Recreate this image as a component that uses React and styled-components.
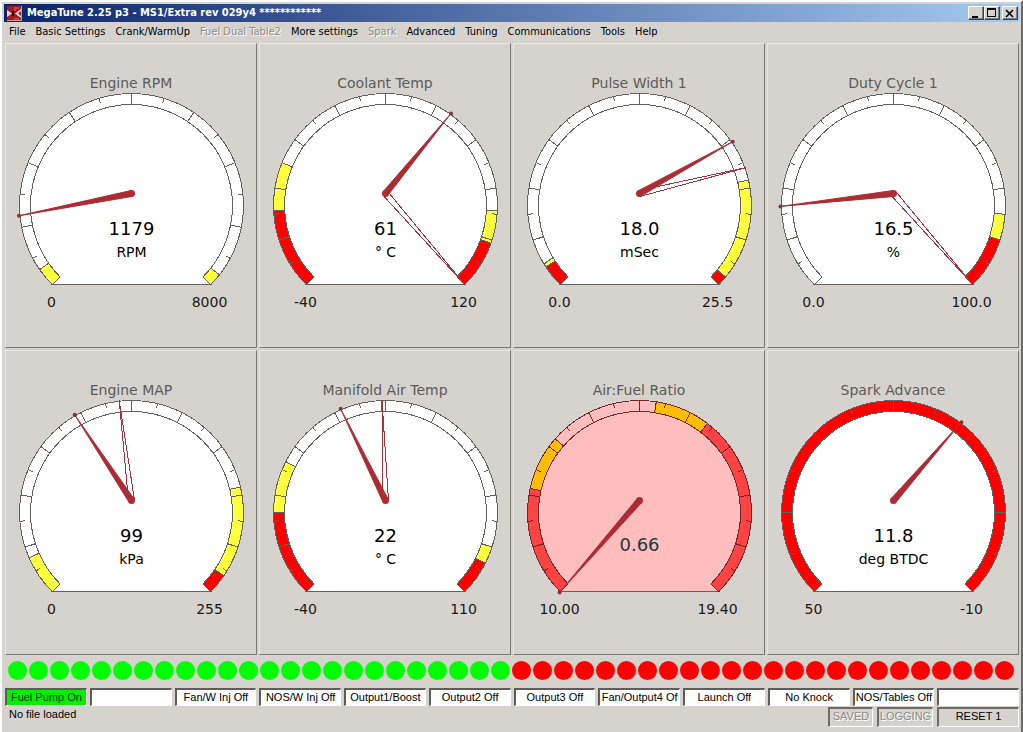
import React from "react";
import styled, { createGlobalStyle } from "styled-components";

const FACE = "#d6d3ce";
const YELLOW = "#ffff3c";
const RED = "#ff0000";

const GlobalStyle = createGlobalStyle`
  * {
    box-sizing: border-box;
  }
  body {
    margin: 0;
    background: ${FACE};
    color: black;
    font-family: "Liberation Sans", Arial, sans-serif;
    font-size: 11px;
  }
`

const Window = styled.div`
  min-height: 100vh;
  display: flex;
  flex-direction: column;
  background: ${FACE};
  padding: 2px 2px 0 2px;
  border-style: solid;
  border-width: 2px 2px 0 2px;
  border-color: white #6b6963 white white;
`

const TitleBar = styled.header`
  height: 18px;
  display: flex;
  align-items: center;
  padding: 0 1px 0 3px;
  background: linear-gradient(90deg, #0a246a, #a6caf0);
`

const Title = styled.h1`
  flex: 1;
  margin: 0 0 0 5px;
  font-family: "DejaVu Sans Condensed", "DejaVu Sans", sans-serif;
  font-stretch: condensed;
  font-size: 11px;
  font-weight: bold;
  line-height: 18px;
  color: white;
  white-space: nowrap;
`

const WindowButton = styled.button`
  width: 16px;
  height: 14px;
  padding: 0;
  margin-left: ${props => (props.$apart ? "2px" : "0")};
  display: flex;
  align-items: center;
  justify-content: center;
  background: ${FACE};
  border: 1px solid;
  border-color: white #404040 #404040 white;
  box-shadow: inset -1px -1px 0 #808080;
`

const MenuBar = styled.nav`
  height: 20px;
  display: flex;
  align-items: center;
`

const MenuItem = styled.button`
  border: 0;
  padding: 0 5px;
  background: none;
  font-family: "DejaVu Sans Condensed", "DejaVu Sans", sans-serif;
  font-stretch: condensed;
  font-size: 11px;
  line-height: 20px;
  white-space: nowrap;
  color: black;
  &:disabled {
    color: #8c8a85;
    text-shadow: 1px 1px 0 white;
  }
`

const Body = styled.main`
  padding: 1px 0 5px 1px;
  display: flex;
  flex-direction: column;
`

const GaugeGrid = styled.div`
  display: grid;
  grid-template-columns: repeat(4, 1fr);
  gap: 2px;
`

const Panel = styled.section`
  display: flex;
  flex-direction: column;
  align-items: center;
  padding: 30px 0 35px;
  border: 1px solid;
  border-color: #e9e8e5 #7b7974 #7b7974 #e9e8e5;
`

const GaugeTitle = styled.h2`
  margin: 0;
  font-family: "DejaVu Sans", Verdana, sans-serif;
  font-size: 14px;
  font-weight: normal;
  line-height: 18px;
  color: #5c5a57;
`

const Dial = styled.svg`
  display: block;
  width: 240px;
  height: 220px;
  font-family: "DejaVu Sans", Verdana, sans-serif;
  text-anchor: middle;
`

const Leds = styled.div`
  display: flex;
  justify-content: space-between;
  padding: 6px 5px 8px 3px;
`

const Led = styled.span`
  width: 19px;
  height: 19px;
  border-radius: 50%;
  background: ${props => (props.$on ? "#00ff00" : RED)};
`

const Outputs = styled.div`
  display: grid;
  grid-template-columns: repeat(12, minmax(0, 1fr));
  gap: 3px;
`

const Output = styled.div`
  height: 18px;
  overflow: hidden;
  text-align: center;
  line-height: 15px;
  white-space: nowrap;
  color: ${props => (props.$on ? "#003000" : "black")};
  background: ${props => (props.$on ? "#00f000" : "white")};
  border-style: solid;
  border-width: 2px 1px 1px 2px;
  border-color: #5f5d59 white white #5f5d59;
`

const StatusBar = styled.footer`
  display: flex;
  align-items: flex-start;
  gap: 4px;
  padding-top: 1px;
`

const FileName = styled.span`
  flex: 1;
  padding-left: 4px;
  line-height: 14px;
`

const StatusButton = styled.button`
  width: ${props => props.$width}px;
  height: 20px;
  padding: 0 0 2px;
  font-family: inherit;
  font-size: 11px;
  line-height: 15px;
  color: black;
  background: ${FACE};
  border-style: solid;
  border-width: 2px 1px 1px 2px;
  border-color: #6e6c68 white white #6e6c68;
  &:disabled {
    color: #8c8a85;
    text-shadow: 1px 1px 0 white;
  }
`

const menu = [
  "File", "Basic Settings", "Crank/WarmUp", "Fuel Dual Table2", "More settings", "Spark",
  "Advanced", "Tuning", "Communications", "Tools", "Help"
]
const disabledMenu = ["Fuel Dual Table2", "Spark"]

// zones: [from, to, color], peak: outlined needle
const gauges = [
  {
    title: "Engine RPM", min: 0, max: 8000, value: 1179, text: "1179", units: "RPM", low: "0", high: "8000", steps: 8,
    zones: [[0, 300, YELLOW], [7800, 8000, YELLOW]]
  },
  {
    title: "Coolant Temp", min: -40, max: 120, value: 61, text: "61", units: "° C", low: "-40", high: "120", steps: 10, peak: 120,
    zones: [[-40, -15, RED], [-15, 0, YELLOW], [95, 105, YELLOW], [105, 120, RED]]
  },
  {
    title: "Pulse Width 1", min: 0, max: 25.5, value: 18, text: "18.0", units: "mSec", low: "0.0", high: "25.5", steps: 10, peak: 19.4,
    zones: [[0, 1.1, RED], [1.1, 1.3, YELLOW], [20, 25, YELLOW], [25, 25.5, RED]]
  },
  {
    title: "Duty Cycle 1", min: 0, max: 100, value: 16.5, text: "16.5", units: "%", low: "0.0", high: "100.0", steps: 10, peak: 100,
    zones: [[85, 90, YELLOW], [90, 100, RED]]
  },
  {
    title: "Engine MAP", min: 0, max: 255, value: 99, text: "99", units: "kPa", low: "0", high: "255", steps: 10, peak: 121.6,
    zones: [[0, 20, YELLOW], [200, 245, YELLOW], [245, 255, RED]]
  },
  {
    title: "Manifold Air Temp", min: -40, max: 110, value: 22, text: "22", units: "° C", low: "-40", high: "110", steps: 10, peak: 34,
    zones: [[-40, -15, RED], [-15, 0, YELLOW], [95, 100, YELLOW], [100, 110, RED]]
  },
  {
    title: "Air:Fuel Ratio", min: 10, max: 19.4, value: 10, text: "0.66", low: "10.00", high: "19.40", steps: 10, alarm: true,
    zones: [[10, 12, "#ff4242"], [12, 13, "#ffbd00"], [15, 16, "#ffbd00"], [16, 19.4, "#ff4242"]]
  },
  {
    title: "Spark Advance", min: 50, max: -10, value: 11.8, text: "11.8", units: "deg BTDC", low: "50", high: "-10", steps: 6,
    zones: [[50, -10, RED]]
  }
]

const outputs = [
  "Fuel Pump On", "", "Fan/W Inj Off", "NOS/W Inj Off", "Output1/Boost", "Output2 Off",
  "Output3 Off", "Fan/Output4 Of", "Launch Off", "No Knock", "NOS/Tables Off", ""
]

const CX = 120.5
const CY = 113.5
const OUTER = 112
const INNER = 101
const PIVOT_Y = 101.5

// the scale covers 270 degrees, starting at the lower left
function point(fraction, r) {
  const a = (135 + fraction * 270) * Math.PI / 180
  return [CX + r * Math.cos(a), CY + r * Math.sin(a)]
}

function band(from, to) {
  const large = (to - from) * 270 > 180 ? 1 : 0
  return `M${point(from, OUTER)} A${OUTER} ${OUTER} 0 ${large} 1 ${point(to, OUTER)} L${point(to, INNER)} A${INNER} ${INNER} 0 ${large} 0 ${point(from, INNER)} Z`
}

function needle(fraction, half) {
  const [x, y] = point(fraction, OUTER + 1)
  const len = Math.hypot(x - CX, y - PIVOT_Y)
  const nx = -(y - PIVOT_Y) / len * half
  const ny = (x - CX) / len * half
  return `M${CX + nx} ${PIVOT_Y + ny} L${x} ${y} L${CX - nx} ${PIVOT_Y - ny}`
}

function Gauge({ gauge }) {
  const scale = v => (v - gauge.min) / (gauge.max - gauge.min)
  const line = gauge.alarm ? "#70282c" : "#63615e"
  const [tipX, tipY] = point(scale(gauge.value), OUTER + 1)

  const ticks = []
  for (let i = 1; i < gauge.steps * 2; i++) {
    const [x1, y1] = point(i / gauge.steps / 2, OUTER)
    const [x2, y2] = point(i / gauge.steps / 2, i % 2 ? OUTER - 5 : INNER)
    ticks.push(<line key={i} x1={x1} y1={y1} x2={x2} y2={y2} />)
  }

  return (
    <Panel>
      <GaugeTitle>{gauge.title}</GaugeTitle>
      <Dial viewBox="0 0 240 220">
        <path
          d={`M${point(0, OUTER)} A${OUTER} ${OUTER} 0 1 1 ${point(1, OUTER)} Z`}
          fill={gauge.alarm ? "#ffbdbd" : "white"}
          stroke="#63615e"
          shapeRendering="crispEdges"
        />
        <g stroke={line} fill="none" shapeRendering="crispEdges">
          <path d={band(0, 1)} />
          {gauge.zones.map(([from, to, color]) => <path key={from} d={band(scale(from), scale(to))} fill={color} />)}
          {ticks}
        </g>
        {gauge.peak !== undefined && (
          <path d={needle(scale(gauge.peak), 3)} fill="none" stroke="#a5353c" shapeRendering="crispEdges" />
        )}
        <g fill="#ad2c34">
          <path d={needle(scale(gauge.value), 3)} stroke="#ad2c34" strokeWidth="1" />
          <circle cx={CX} cy={PIVOT_Y} r="3.5" />
          <circle cx={tipX} cy={tipY} r="2" fill="#84343a" />
        </g>
        <text x={CX} y={gauge.units ? 143 : 152} fontSize="18" fill={gauge.alarm ? "#183c3c" : "black"}>{gauge.text}</text>
        {gauge.units && <text x={CX} y="165" fontSize="14">{gauge.units}</text>}
        <text x={CX - 80} y="215" fontSize="14" fill="#181818">{gauge.low}</text>
        <text x={CX + 78} y="215" fontSize="14" fill="#181818">{gauge.high}</text>
      </Dial>
    </Panel>
  );
}

function AppIcon() {
  return (
    <svg width="15" height="15" viewBox="0 0 15 15">
      <rect width="15" height="15" fill="#a01c20" />
      <path d="M0 4l5 3.5 -5 3.5z" fill="#f0d0cc" />
      <path d="M5 5h2v5h-2z" fill="#3c0408" />
      <path d="M14 3l-6 4.5 6 4.5v-2l-3 -2.5 3 -2.5z" fill="#f4dcd8" />
      <path d="M7 1h5v2h-3v2h-2zM7 12h5v2h-5z" fill="#c84448" />
      <path d="M0 14.5h15M14.5 0v15" stroke="#d89894" />
    </svg>
  );
}

function App() {
  return (
    <>
      <GlobalStyle />
      <Window>
        <TitleBar>
          <AppIcon />
          <Title>MegaTune 2.25 p3 - MS1/Extra rev 029y4 ************</Title>
          <WindowButton aria-label="Minimize">
            <svg width="10" height="9"><path d="M1 7h6v2h-6z" /></svg>
          </WindowButton>
          <WindowButton aria-label="Maximize">
            <svg width="10" height="10"><path d="M0 0h9v9h-9zM1 2v6h7v-6z" fillRule="evenodd" /></svg>
          </WindowButton>
          <WindowButton aria-label="Close" $apart>
            <svg width="10" height="9"><path d="M1 1l7 7M8 1l-7 7" stroke="black" strokeWidth="1.6" /></svg>
          </WindowButton>
        </TitleBar>
        <MenuBar>
          {menu.map(name => <MenuItem key={name} disabled={disabledMenu.includes(name)}>{name}</MenuItem>)}
        </MenuBar>
        <Body>
          <GaugeGrid>
            {gauges.map(gauge => <Gauge key={gauge.title} gauge={gauge} />)}
          </GaugeGrid>
          <Leds>
            {Array.from({ length: 48 }, (_, i) => <Led key={i} $on={i < 24} />)}
          </Leds>
          <Outputs>
            {outputs.map((name, i) => <Output key={i} $on={i === 0}>{name}</Output>)}
          </Outputs>
          <StatusBar>
            <FileName>No file loaded</FileName>
            <StatusButton $width={45} disabled>SAVED</StatusButton>
            <StatusButton $width={56} disabled>LOGGING</StatusButton>
            <StatusButton $width={82}>RESET 1</StatusButton>
          </StatusBar>
        </Body>
      </Window>
    </>
  );
}

export default App;
